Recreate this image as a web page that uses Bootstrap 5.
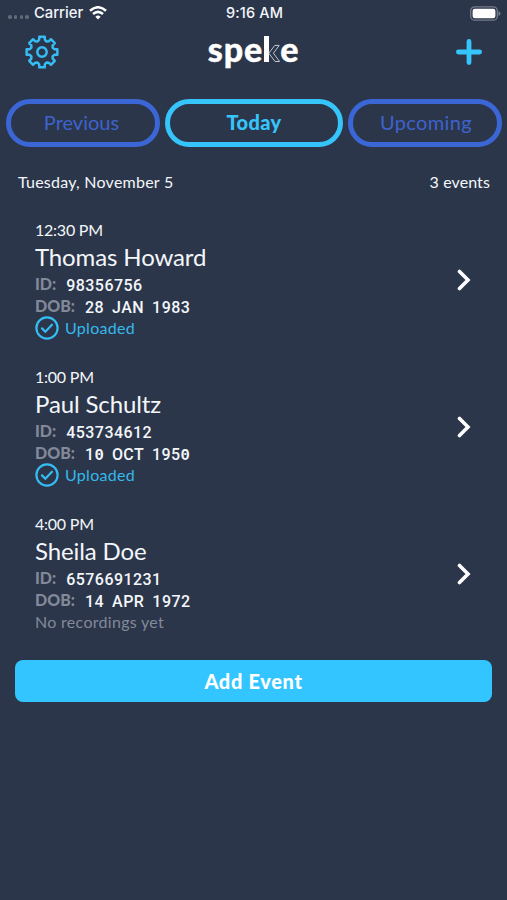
<!DOCTYPE html>
<html lang="en">
<head>
<meta charset="utf-8">
<meta name="viewport" content="width=device-width, initial-scale=1">
<title>speke</title>
<link href="https://cdn.jsdelivr.net/npm/bootstrap@5.3.0/dist/css/bootstrap.min.css" rel="stylesheet">
<style>
body{background:#2c364a;color:#f3f6fa;font-family:Lato,sans-serif;font-size:16px;min-height:900px}
.status-bar{height:26px;padding:0 6px 0 8px;font:500 14.8px/26px Inter,sans-serif;display:grid;grid-template-columns:1fr auto 1fr}
.signal{gap:2.2px;padding-top:8px;margin-right:5px}
.signal i{width:3.6px;height:3.6px;border-radius:50%;background:#626b7a}
.clock{font-size:14.5px;letter-spacing:.15px}
.title-bar{height:73px;padding:0 24px;display:grid;grid-template-columns:1fr auto 1fr}
.logo{font-weight:900;font-size:34px;line-height:46px;letter-spacing:.9px;color:#fff;-webkit-text-stroke:.4px #fff}
.logo svg{display:inline-block;vertical-align:baseline;margin:0 .5px 0 .5px}
.tabs{gap:5px;padding:0 5px 0 6px}
.pill{height:48px;border:5px solid #3b67d6;border-radius:24px;color:#3d63ce;font-size:20px;line-height:36px;padding:0 0 2px;background:none;letter-spacing:.35px}
.pill:first-child{letter-spacing:0;padding-right:3px}
.pill:last-child{padding-left:2px}
.pill.current{border-color:#35c5fb;color:#35c5fb;font-weight:900}
.side{width:154px}
.summary{padding:0 17px 0 18px;height:71px;line-height:69px}
.date{letter-spacing:.24px}
.count{letter-spacing:.1px}
.event{height:147px;padding:0 36px 0 35px}
.time{font-size:16px;line-height:23px;letter-spacing:-.23px}
.who{font-size:24px;line-height:32px;letter-spacing:-.12px}
.meta{height:22px;line-height:22px}
.meta b{color:#828999;font-weight:900;font-size:16px}
.value{font-family:Roboto,sans-serif;font-weight:500;font-size:16px;letter-spacing:.45px;position:relative;top:1px}
.value b{all:unset;font-family:"Liberation Mono",monospace;font-weight:bold;font-size:15.6px;letter-spacing:0}
.id-value{margin-left:10px}
.dob-value{margin-left:10px;word-spacing:3.6px}
.state{height:22px;line-height:22px;color:#35b8ea;letter-spacing:.3px}
.state svg{margin-right:6px}
.pending{color:#828999}
.add{height:42px;margin:1px 15px 0;border-radius:8px;background:#33c5ff;color:#fff;font-size:20px;font-weight:900;line-height:40px;padding:0;border:0;letter-spacing:.65px}
</style>
<script src="https://cdn.jsdelivr.net/npm/bootstrap@5.3.0/dist/js/bootstrap.bundle.min.js"></script>
</head>
<body>
<div class="status-bar">
  <div class="d-flex align-items-center">
    <span class="signal d-flex"><i></i><i></i><i></i><i></i></span><span>Carrier</span>
    <svg style="margin-left:6px" width="18" height="14" viewBox="0 0 18 14" fill="none" stroke="#fff" stroke-width="2.5"><path d="M1 4.7Q9-2.2 17 4.7M4 8q5-4.3 10 0"/><path d="M6.4 10.7q2.6-2.3 5.2 0L9 13.4z" fill="#fff" stroke="none"/></svg>
  </div>
  <div class="clock">9:16 AM</div>
  <div class="d-flex justify-content-end align-items-center">
    <svg width="31" height="15" viewBox="0 0 31 15"><rect x=".7" y=".8" width="26.6" height="13.4" rx="4" fill="none" stroke="#747b89" stroke-width="1.3"/><rect x="2.6" y="2.7" width="22.8" height="9.6" rx="2.2" fill="#fff"/><path d="M28.5 5v5q2-1 2-2.5T28.5 5" fill="#747b89"/></svg>
  </div>
</div>
<header class="title-bar align-items-start">
  <svg width="36" height="36" class="mt-2" viewBox="-18 -18 36 36" fill="none" stroke="#35bdf3" stroke-width="2.5" stroke-linejoin="round"><circle r="4.7"/><path id="gear"/></svg>
  <div class="logo">spe<svg width="16" height="26" viewBox="0 0 16 26"><path d="M0 0h5v26H0z" fill="#fff"/><path d="M4.8 17.2l6-7.8h4.4l-5.8 7.8 6.2 8.3h-4.5z" fill="none" stroke="#c3c9d2" stroke-width="1"/></svg>e</div>
  <svg width="28" height="28" class="ms-auto" style="margin-top:12px" viewBox="0 0 28 28" stroke="#35c5fb" stroke-width="4.8" stroke-linecap="round"><path d="M14 3.4v21.2M3.4 14h21.2"/></svg>
</header>
<nav class="tabs d-flex">
  <button class="pill side">Previous</button><button class="pill current flex-fill">Today</button><button class="pill side">Upcoming</button>
</nav>
<div class="summary d-flex justify-content-between"><span class="date">Tuesday, November 5</span><span class="count">3 events</span></div>
<main>
  <section class="event d-flex justify-content-between">
    <div>
      <div class="time">12:30 PM</div><div class="who">Thomas Howard</div>
      <div class="meta"><b>ID:</b><span class="value id-value">98356756</span></div>
      <div class="meta"><b>DOB:</b><span class="value dob-value">28 JAN 1983</span></div>
      <div class="state d-flex align-items-center"><svg width="24" height="24" viewBox="0 0 24 24" fill="none" stroke="#35bdf3" stroke-width="2.2" stroke-linecap="round"><circle cx="12" cy="12" r="10.6"/><path d="M7 12.4l3.3 3.3 6.7-7"/></svg>Uploaded</div>
    </div>
    <svg class="chev" width="14" height="22" style="margin-top:51px" viewBox="0 0 14 22" fill="none" stroke="#fff" stroke-width="3.6" stroke-linecap="round"><path d="M2.5 2.5l8.5 8.5-8.5 8.5"/></svg>
  </section>
  <section class="event d-flex justify-content-between">
    <div>
      <div class="time">1:00 PM</div><div class="who">Paul Schultz</div>
      <div class="meta"><b>ID:</b><span class="value id-value">453734612</span></div>
      <div class="meta"><b>DOB:</b><span class="value dob-value">1<b>0</b> OCT 195<b>0</b></span></div>
      <div class="state d-flex align-items-center"><svg width="24" height="24" viewBox="0 0 24 24" fill="none" stroke="#35bdf3" stroke-width="2.2" stroke-linecap="round"><circle cx="12" cy="12" r="10.6"/><path d="M7 12.4l3.3 3.3 6.7-7"/></svg>Uploaded</div>
    </div>
    <svg class="chev" width="14" height="22" style="margin-top:51px" viewBox="0 0 14 22" fill="none" stroke="#fff" stroke-width="3.6" stroke-linecap="round"><path d="M2.5 2.5l8.5 8.5-8.5 8.5"/></svg>
  </section>
  <section class="event d-flex justify-content-between">
    <div>
      <div class="time">4:00 PM</div><div class="who">Sheila Doe</div>
      <div class="meta"><b>ID:</b><span class="value id-value">6576691231</span></div>
      <div class="meta"><b>DOB:</b><span class="value dob-value">14 APR 1972</span></div>
      <div class="state pending">No recordings yet</div>
    </div>
    <svg class="chev" width="14" height="22" style="margin-top:51px" viewBox="0 0 14 22" fill="none" stroke="#fff" stroke-width="3.6" stroke-linecap="round"><path d="M2.5 2.5l8.5 8.5-8.5 8.5"/></svg>
  </section>
</main>
<div class="d-grid"><button class="btn add">Add Event</button></div>
<script>
// Eight-tooth outline: each tooth spans 45 degrees.
let d='';
for(let k=0;k<8;k++)for(const [a,r] of [[-10,15.6],[10,15.6],[13,12.6],[22.5,11.5],[32,12.6]]){
  const t=(k*45+a)*Math.PI/180;
  d+=(d?'L':'M')+(r*Math.sin(t)).toFixed(2)+' '+(-r*Math.cos(t)).toFixed(2);
}
document.getElementById('gear').setAttribute('d',d+'Z');
</script>
</body>
</html>
